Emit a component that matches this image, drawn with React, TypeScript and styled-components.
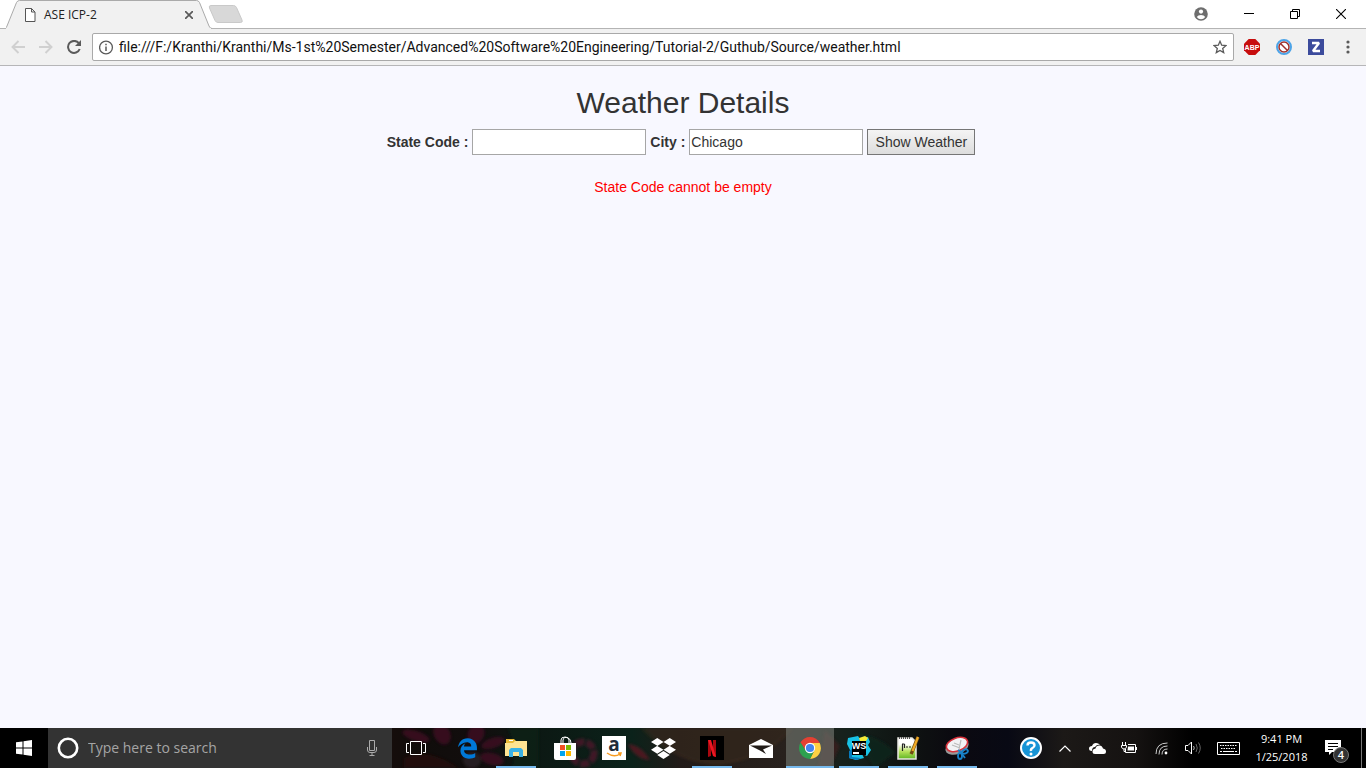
import React, { useState } from "react";
import styled, { createGlobalStyle } from "styled-components";
import { FaDropbox, FaEdgeLegacy } from "react-icons/fa";

const uiFont = `"Segoe UI", "Open Sans", "Noto Sans", sans-serif`;

const GlobalStyle = createGlobalStyle`
  *, *::before, *::after { box-sizing: border-box; }
  body { margin: 0; background: #f8f8ff; }
  svg { display: block; flex: none; }
  button, input { font: inherit; color: inherit; }
`;

const Screen = styled.div`
  display: flex;
  flex-direction: column;
  min-height: 100vh;
  font-family: ${uiFont};
`;

/* ---------- browser frame ---------- */

const TabStrip = styled.header`
  display: flex;
  height: 29px;
  background: #fff;
  border-bottom: 1px solid #b4b4b4;
`;

const Tab = styled.div`
  position: relative;
  z-index: 0;
  display: flex;
  align-items: center;
  width: 206px;
  height: 29px;
  margin-left: 6px;
  padding: 0 16px 0 18px;
  font-size: 12px;
  line-height: 16px;
  color: #222;
`;

const TabShape = styled.svg`
  position: absolute;
  inset: 0;
  z-index: -1;
`;

const TabTitle = styled.span`
  flex: 1;
  margin-left: 8px;
`;

const IconButton = styled.button<{ $width: number; $color?: string }>`
  display: flex;
  align-items: center;
  justify-content: center;
  flex: none;
  width: ${(p) => p.$width}px;
  height: 28px;
  padding: 0;
  border: 0;
  background: none;
  color: ${(p) => p.$color ?? "#5a5a5a"};
`;

const NewTab = styled(IconButton)`
  margin-left: -5px;
`;

const WindowControls = styled.div`
  display: flex;
  margin-left: auto;
  padding-right: 2px;
`;

const Toolbar = styled.nav`
  display: flex;
  align-items: center;
  height: 37px;
  padding: 0 2px 0 4px;
  background: #f1f1f1;
  border-bottom: 1px solid #b6b6b8;
`;

const AddressBar = styled.div`
  display: flex;
  align-items: center;
  flex: 1;
  min-width: 0;
  height: 28px;
  margin: 0 2px 0 4px;
  padding-left: 6px;
  background: #fff;
  border: 1px solid #a9a9a9;
  border-radius: 2px;
`;

const AddressInput = styled.input`
  flex: 1;
  min-width: 0;
  margin-left: 5px;
  padding: 0;
  border: 0;
  outline: 0;
  background: none;
  font-family: "Segoe UI", Roboto, sans-serif;
  font-size: 14px;
  line-height: 20px;
  color: #111;
`;

/* ---------- page ---------- */

const Page = styled.main`
  flex: 1;
  font-family: "Helvetica Neue", Helvetica, Arial, "Liberation Sans", sans-serif;
  font-size: 14px;
  line-height: 20px;
  color: #333;
  text-align: center;
`;

const Title = styled.h2`
  margin: 20px 0 10px;
  font-size: 30px;
  font-weight: 400;
  line-height: 33px;
`;

const WeatherForm = styled.form`
  display: flex;
  flex-wrap: wrap;
  align-items: center;
  justify-content: center;
  gap: 4px;
  padding-right: 4px;
`;

const FieldLabel = styled.label`
  font-weight: 700;
`;

const TextField = styled.input`
  width: 174px;
  height: 26px;
  padding: 1px;
  border: 1px solid #a6a6a6;
  background: #fff;
`;

const SubmitButton = styled.button`
  width: 108px;
  height: 26px;
  padding: 0;
  border: 1px solid #767676;
  background: linear-gradient(#f4f4f4, #dddddd);
  white-space: nowrap;
`;

const ErrorText = styled.p`
  margin: 22px 0 0;
  color: #f00;
`;

/* ---------- taskbar ---------- */

const Taskbar = styled.footer`
  position: relative;
  z-index: 0;
  display: flex;
  height: 40px;
  background: #000;
  color: #fff;
  overflow: hidden;
`;

const Wallpaper = styled.svg`
  position: absolute;
  left: 392px;
  top: 0;
  z-index: -1;
`;

const TaskButton = styled.button<{ $active?: boolean; $running?: boolean }>`
  position: relative;
  display: flex;
  align-items: center;
  justify-content: center;
  flex: none;
  width: 48px;
  height: 40px;
  padding: 0;
  border: 0;
  background: ${(p) => (p.$active ? "rgba(120, 125, 118, 0.6)" : "none")};
  color: #fff;

  &::after {
    content: "";
    position: absolute;
    bottom: 0;
    left: ${(p) => (p.$active ? 0 : 4)}px;
    right: ${(p) => (p.$active ? 0 : 4)}px;
    height: 2px;
    background: ${(p) => (p.$running || p.$active ? "#76b9ed" : "none")};
  }
`;

const SearchBox = styled.label`
  display: flex;
  align-items: center;
  flex: none;
  width: 344px;
  padding: 0 12px 0 8px;
  background: #333;
`;

const SearchInput = styled.input`
  flex: 1;
  min-width: 0;
  margin-left: 8px;
  padding: 0;
  border: 0;
  outline: 0;
  background: none;
  font-size: 14px;
  line-height: 20px;

  &::placeholder { color: #a5a5a5; opacity: 1; }
`;

const TaskList = styled.div`
  display: flex;
  gap: 1px;
  margin-left: 3px;
`;

const Tray = styled.div`
  display: flex;
  align-items: center;
  margin-left: auto;
`;

const TrayButton = styled(IconButton)`
  height: 40px;
  color: #fff;
`;

const Clock = styled.time`
  width: 69px;
  text-align: center;
  font-size: 11px;
  line-height: 18px;
  white-space: nowrap;
`;

const DesktopEdge = styled.div`
  width: 5px;
  height: 40px;
  border-left: 1px solid #777;
`;

const WallpaperArt = () => (
  <Wallpaper width="800" height="40" viewBox="0 0 800 40" aria-hidden="true">
    <defs>
      <linearGradient id="wall">
        <stop offset="0" stopColor="#150d0b" />
        <stop offset=".04" stopColor="#100d0b" />
        <stop offset=".1" stopColor="#120d0d" />
        <stop offset=".18" stopColor="#0c1813" />
        <stop offset=".3" stopColor="#0b221a" />
        <stop offset=".36" stopColor="#221b18" />
        <stop offset=".49" stopColor="#28211d" />
        <stop offset=".57" stopColor="#15211c" />
        <stop offset=".64" stopColor="#0f1412" />
        <stop offset=".7" stopColor="#0b0a10" />
        <stop offset=".77" stopColor="#080914" />
        <stop offset=".84" stopColor="#1c1917" />
        <stop offset=".93" stopColor="#151211" />
        <stop offset="1" stopColor="#000" />
      </linearGradient>
      <filter id="soft"><feGaussianBlur stdDeviation="1.5" /></filter>
    </defs>
    <path fill="url(#wall)" d="M0 0H800V40H0Z" />
    <g filter="url(#soft)" opacity=".8">
      <g fill="#3f1022">
        <ellipse cx="24" cy="8" rx="14" ry="5" transform="rotate(18 24 8)" />
        <ellipse cx="50" cy="6" rx="8" ry="11" transform="rotate(-28 50 6)" />
        <ellipse cx="84" cy="6" rx="8" ry="10" transform="rotate(24 84 6)" />
        <ellipse cx="101" cy="15" rx="12" ry="5" transform="rotate(-18 101 15)" />
        <ellipse cx="100" cy="31" rx="12" ry="6" transform="rotate(14 100 31)" />
        <ellipse cx="80" cy="32" rx="9" ry="8" fill="#2b2226" />
      </g>
      <path d="M12 30Q34 20 60 36L66 40H12Z" fill="#26100a" />
      <path d="M116 0Q126 23 120 40H146V0Z" fill="#082018" />
      <circle cx="191" cy="25" r="11" fill="none" stroke="#4d172c" strokeWidth="7" strokeDasharray="9 2" />
      <path d="M236 16Q249 17 258 32Q243 31 236 16Z" fill="#5c1520" />
      <path d="M252 0Q282 32 326 36Q376 30 398 0Z" fill="#30271f" />
      <path d="M250 0Q282 34 326 36Q376 30 400 0" fill="none" stroke="#4e341e" />
      <path d="M433 2L448 18L438 40H426Z" fill="#3a1c1c" />
      <path d="M463 5Q490 9 503 25L482 40Z" fill="#11281f" />
    </g>
  </Wallpaper>
);

const ChromeIcon = () => (
  <svg width="22" height="22" viewBox="0 0 22 22">
    <path fill="#e34133" d="M1.5 5.5A11 11 0 0 1 20.5 5.5V6H11L6.7 13.5Z" />
    <path fill="#fdd043" d="M20.7 6A11 11 0 0 1 11 22L15.3 13.5L11 6Z" />
    <path fill="#2da150" d="M1.5 5.5A11 11 0 0 0 11 22L15.3 13.5H6.7Z" />
    <circle cx="11" cy="11" r="5.2" fill="#fff" />
    <circle cx="11" cy="11" r="4.1" fill="#4384ef" />
  </svg>
);

const WebStormIcon = () => (
  <svg width="24" height="24" viewBox="0 0 24 24">
    <path fill="#18c3e6" d="M1 2L11 0L13 3L21 1L23 6L21 9L24 14L20 20L15 18L17 22L9 24L2 22L4 16L0 8Z" />
    <path fill="#f5ec37" d="M12 2L18 0L21 2L19 5H13Z" />
    <path fill="#087bbd" d="M2 15L5 13V21L14 22L10 24L2 22Z" />
    <path fill="#000" d="M5 5H19V19H5Z" />
    <text x="12" y="13" fill="#fff" fontFamily="Liberation Sans" fontWeight="700" fontSize="9" textAnchor="middle">WS</text>
    <path fill="#fff" d="M6 16H12V18H6Z" />
  </svg>
);

const NotepadIcon = () => (
  <svg width="24" height="24" viewBox="0 0 24 24">
    <defs>
      <linearGradient id="leaf" x2="0" y2="1">
        <stop offset=".3" stopColor="#fff" />
        <stop offset=".65" stopColor="#b4e05a" />
        <stop offset="1" stopColor="#5eb522" />
      </linearGradient>
    </defs>
    <path d="M2 2H16L20 6V23H2Z" fill="url(#leaf)" stroke="#e8e8e2" strokeWidth="1.5" />
    <path d="M3 2H15" stroke="#555" strokeWidth="2" strokeDasharray="1 1" />
    <path d="M6.500 8V15M6 8H8.500M8.500 8V12M10 11H12M13 11H15" fill="none" stroke="#222" strokeWidth="1.200" />
    <path d="M22 1L16 16L15 18" stroke="#704c12" strokeWidth="3.400" />
    <path d="M22 1L16.500 15" stroke="#f0aa25" strokeWidth="2.200" />
  </svg>
);

const SnippingIcon = () => (
  <svg width="24" height="24" viewBox="0 0 24 24" fill="none">
    <ellipse cx="12" cy="11" rx="12" ry="7" fill="#999" transform="rotate(-20 12 11)" />
    <ellipse cx="12" cy="8.500" rx="11" ry="6.500" fill="#f2f2f5" stroke="#d8323c" strokeWidth="1.600" transform="rotate(-20 12 8.500)" />
    <path d="M7 9L15 12M16 4L14 13M9 7L14 9" stroke="#bbb" strokeWidth="1.200" />
    <g stroke="#1882c9" strokeWidth="1.800">
      <ellipse cx="20" cy="15.500" rx="3" ry="2" transform="rotate(-20 20 15.500)" />
      <ellipse cx="15" cy="20" rx="2" ry="3" />
      <path d="M13 14L17 16.500V18L20 22" />
    </g>
  </svg>
);

const tasks: { name: string; icon: React.ReactNode; running?: boolean; active?: boolean }[] = [
  { name: "Edge", icon: <FaEdgeLegacy size={21} color="#0078d7" /> },
  {
    name: "File Explorer",
    running: true,
    icon: (
      <svg width="22" height="20" viewBox="0 0 22 20">
        <path fill="#e9b935" d="M1 1H9L11 3H21V6H1Z" />
        <path fill="#fff" d="M4 2H8V3H4Z" />
        <path fill="#ffe492" d="M0 5H8L10 3H22V18H0Z" />
        <path fill="#3ab2e5" d="M4 19V12L6 10H16L18 12V19H14V14H8V19Z" />
      </svg>
    ),
  },
  {
    name: "Store",
    icon: (
      <svg width="24" height="24" viewBox="0 0 24 24">
        <path d="M8 7V4Q8 1 12 1T16 4V7M10 7V4Q11 0 15 2Q18 3 18 7" fill="none" stroke="#fff" />
        <path fill="#fff" d="M1 7H23V22Q23 24 21 24H3Q1 24 1 22Z" />
        <path fill="#f25022" d="M7 9H12V14H7Z" />
        <path fill="#7fba00" d="M13 9H18V14H13Z" />
        <path fill="#00a4ef" d="M7 15H12V20H7Z" />
        <path fill="#ffb900" d="M13 15H18V20H13Z" />
      </svg>
    ),
  },
  {
    name: "Amazon",
    icon: (
      <svg width="24" height="24" viewBox="0 0 24 24" overflow="visible">
        <path fill="#fff" d="M0 0H24V24H0Z" />
        <text x="12" y="15" fill="#222c38" fontFamily="Open Sans" fontWeight="700" fontSize="19" textAnchor="middle">a</text>
        <path d="M5 17Q12 22 18 18M16 17H19L18 20" fill="none" stroke="#f79b20" strokeWidth="1.500" />
      </svg>
    ),
  },
  { name: "Dropbox", icon: <FaDropbox size={25} /> },
  {
    name: "Netflix",
    running: true,
    icon: (
      <svg width="24" height="24" viewBox="0 0 24 24">
        <path fill="#000" d="M0 0H24V24H0Z" />
        <path fill="#a9070f" d="M8 4H11V20L8 21ZM13 4H16V21L13 20Z" />
        <path fill="#ed1722" d="M8 4H11L16 21L13 20Z" />
      </svg>
    ),
  },
  {
    name: "Mail",
    icon: (
      <svg width="24" height="19" viewBox="0 0 24 19">
        <path fill="#fff" d="M0 6L12 0L24 6V19H0Z" />
        <path fill="#211b17" d="M1 6.500H23L14 10.500L17 15L10 11Z" />
      </svg>
    ),
  },
  { name: "Chrome", active: true, icon: <ChromeIcon /> },
  { name: "WebStorm", running: true, icon: <WebStormIcon /> },
  { name: "Notepad++", running: true, icon: <NotepadIcon /> },
  { name: "Snipping Tool", running: true, icon: <SnippingIcon /> },
];

const BrowserFrame = () => (
  <>
    <TabStrip>
      <Tab>
        <TabShape width="206" height="29" viewBox="0 0 206 29" aria-hidden="true">
          <path
            fill="#f1f1f1"
            stroke="#aaa"
            d="M-1 28.500Q0 28.500 1 26L10.500 2.500Q11.500 .5 13.500 .5H190.500Q192.500 .5 193.500 2.500L203 26Q204 28.500 206 28.500V31H-1Z"
          />
          <path d="M1 28.500H205" stroke="#f1f1f1" />
        </TabShape>
        <svg width="12" height="14" viewBox="0 0 12 14" fill="#fff" stroke="#555">
          <path d="M1.500 .5H7.500L11 4V13.500H1.500ZM7.500 .5V4H11" />
        </svg>
        <TabTitle>ASE ICP-2</TabTitle>
        <IconButton $width={14} aria-label="Close tab">
          <svg width="8" height="8" viewBox="0 0 8 8" stroke="currentColor" strokeWidth="1.700">
            <path d="M0 0L8 8M8 0L0 8" />
          </svg>
        </IconButton>
      </Tab>
      <NewTab $width={38} aria-label="New tab">
        <svg width="36" height="18" viewBox="0 0 36 18">
          <path
            d="M3 .5H25.500Q27.500 .5 28.500 2.500L34 15Q35 17.500 32.500 17.500H10Q8 17.500 7 15.500L1.500 3Q.5 .5 3 .5Z"
            fill="#d8d8d8"
            stroke="#c9c9c9"
          />
        </svg>
      </NewTab>
      <WindowControls>
        <IconButton $width={50} $color="#6e6e6e" aria-label="Profile">
          <svg width="14" height="14" viewBox="0 0 14 14">
            <circle cx="7" cy="7" r="6.800" fill="currentColor" />
            <circle cx="7" cy="4.600" r="2.100" fill="#fff" />
            <path d="M2.800 10Q4 8 7 8T11.200 10Q9.500 12.200 7 12.200T2.800 10Z" fill="#fff" />
          </svg>
        </IconButton>
        <IconButton $width={46} $color="#000" aria-label="Minimize">
          <svg width="10" height="10" viewBox="0 0 10 10"><path d="M0 4.500H10" stroke="currentColor" /></svg>
        </IconButton>
        <IconButton $width={46} $color="#000" aria-label="Restore">
          <svg width="10" height="10" viewBox="0 0 10 10" fill="none" stroke="currentColor">
            <path d="M.5 2.500H7.500V9.500H.5ZM2.500 2.500V.5H9.500V7.500H7.500" />
          </svg>
        </IconButton>
        <IconButton $width={46} $color="#000" aria-label="Close">
          <svg width="10" height="10" viewBox="0 0 10 10" stroke="currentColor" strokeWidth="1.100">
            <path d="M0 0L10 10M10 0L0 10" />
          </svg>
        </IconButton>
      </WindowControls>
    </TabStrip>

    <Toolbar>
      <IconButton $width={28} $color="#d0d0d0" aria-label="Back">
        <svg width="14" height="14" viewBox="0 0 14 14" fill="none" stroke="currentColor" strokeWidth="1.900">
          <path d="M14 7H1.500M7.500 1L1.500 7L7.500 13" />
        </svg>
      </IconButton>
      <IconButton $width={28} $color="#d0d0d0" aria-label="Forward">
        <svg width="14" height="14" viewBox="0 0 14 14" fill="none" stroke="currentColor" strokeWidth="1.900">
          <path d="M0 7H12.500M6.500 1L12.500 7L6.500 13" />
        </svg>
      </IconButton>
      <IconButton $width={28} aria-label="Reload">
        <svg width="14" height="14" viewBox="0 0 14 14">
          <path d="M11.800 3.200A6 6 0 1 0 12.700 9" fill="none" stroke="currentColor" strokeWidth="2" />
          <path d="M14 0V6H8Z" fill="currentColor" />
        </svg>
      </IconButton>
      <AddressBar>
        <svg width="15" height="15" viewBox="0 0 15 15" fill="none" stroke="#5a5a5a">
          <circle cx="7" cy="7.500" r="6.400" strokeWidth="1.300" />
          <path d="M7 6.500V11M7 3.800V5.300" strokeWidth="1.500" />
        </svg>
        <AddressInput
          aria-label="Address"
          defaultValue="file:///F:/Kranthi/Kranthi/Ms-1st%20Semester/Advanced%20Software%20Engineering/Tutorial-2/Guthub/Source/weather.html"
        />
        <IconButton $width={26} aria-label="Bookmark">
          <svg width="14" height="14" viewBox="0 0 14 14" fill="none" stroke="currentColor" strokeWidth="1.300">
            <path d="M7 1.300L8.700 5.200L13 5.600L9.700 8.400L10.700 12.600L7 10.400L3.300 12.600L4.300 8.400L1 5.600L5.300 5.200Z" />
          </svg>
        </IconButton>
      </AddressBar>
      <IconButton $width={32} aria-label="Adblock Plus">
        <svg width="16" height="16" viewBox="0 0 16 16">
          <path fill="#c70d0d" d="M4.700 0H11.300L16 4.700V11.300L11.300 16H4.700L0 11.300V4.700Z" />
          <text x="8" y="11" fill="#fff" fontFamily="Liberation Sans" fontWeight="700" fontSize="7" textAnchor="middle">ABP</text>
        </svg>
      </IconButton>
      <IconButton $width={32} aria-label="Blocker">
        <svg width="16" height="16" viewBox="0 0 16 16">
          <circle cx="8" cy="8" r="7" fill="#fff" stroke="#4ca4e8" strokeWidth="2" />
          <g fill="none" stroke="#9f302b" strokeWidth="1.500">
            <circle cx="8" cy="8" r="5" />
            <path d="M4.500 4.500L11.500 11.500" />
          </g>
        </svg>
      </IconButton>
      <IconButton $width={32} aria-label="Zotero">
        <svg width="16" height="16" viewBox="0 0 16 16">
          <path fill="#3c4b9c" d="M0 0H16V16H0Z" />
          <path d="M4 4H11L5 12H12" fill="none" stroke="#fff" strokeWidth="2.400" strokeLinejoin="bevel" />
        </svg>
      </IconButton>
      <IconButton $width={32} aria-label="Menu">
        <svg width="4" height="14" viewBox="0 0 4 14" fill="currentColor">
          <circle cx="2" cy="2" r="1.600" />
          <circle cx="2" cy="7" r="1.600" />
          <circle cx="2" cy="12" r="1.600" />
        </svg>
      </IconButton>
    </Toolbar>
  </>
);

const WeatherPage = () => {
  const [state, setState] = useState("");
  const [city, setCity] = useState("Chicago");
  return (
    <Page>
      <Title>Weather Details</Title>
      <WeatherForm onSubmit={(e) => e.preventDefault()}>
        <FieldLabel htmlFor="state">State Code :</FieldLabel>
        <TextField id="state" value={state} onChange={(e) => setState(e.target.value)} />
        <FieldLabel htmlFor="city">City :</FieldLabel>
        <TextField id="city" value={city} onChange={(e) => setCity(e.target.value)} />
        <SubmitButton type="submit">Show Weather</SubmitButton>
      </WeatherForm>
      {!state && <ErrorText role="alert">State Code cannot be empty</ErrorText>}
    </Page>
  );
};

const SystemTray = () => (
  <Tray>
    <TrayButton $width={36} aria-label="Help">
      <svg width="22" height="22" viewBox="0 0 22 22">
        <circle cx="11" cy="11" r="10" fill="#1694d6" stroke="#fff" strokeWidth="2" />
        <path d="M7.500 8.500Q7.500 5.500 11 5.500T14.500 8.300Q14.500 10 12.500 11T11 14" fill="none" stroke="#fff" strokeWidth="2.400" />
        <circle cx="11" cy="17" r="1.500" fill="#fff" />
      </svg>
    </TrayButton>
    <TrayButton $width={32} aria-label="Show hidden icons">
      <svg width="12" height="7" viewBox="0 0 12 7" fill="none" stroke="currentColor" strokeWidth="1.200">
        <path d="M.5 6.500L6 1L11.500 6.500" />
      </svg>
    </TrayButton>
    <TrayButton $width={32} aria-label="OneDrive">
      <svg width="17" height="11" viewBox="0 0 17 11">
        <path fill="#fff" d="M3 8Q0 8 0 5.500T3 3Q4 0 7 0Q9.500 0 11 2Q8 1 6 4Q3 4 3 8Z" />
        <path fill="#fff" d="M6 11Q3.500 11 3.500 8.500T6.500 5.500Q7 2.500 10.500 2.500Q13 2.500 14 5.500Q17 6 17 8.500T14.500 11Z" />
      </svg>
    </TrayButton>
    <TrayButton $width={32} aria-label="Battery">
      <svg width="16" height="12" viewBox="0 0 16 12" fill="none" stroke="#fff">
        <path d="M1.500 0V3M4.500 0V3M.5 3.500H5.500V5Q5 7 3 7T.5 5V3.500M3 7V9.500H4.500M7 2.500H14.500V10.500H4.500V7M15.500 5V8" />
        <path d="M7 4.500H13V8.500H6.500Z" fill="#fff" stroke="none" />
      </svg>
    </TrayButton>
    <TrayButton $width={32} aria-label="Network">
      <svg width="13" height="13" viewBox="0 0 13 13" fill="none" stroke="#ccc">
        <path d="M1 12Q1 1 12.500 1M4 12.500Q4 4 12.500 4M7 12.500Q7 7 12.500 7" />
        <circle cx="11" cy="11" r="1.400" fill="#fff" stroke="none" />
      </svg>
    </TrayButton>
    <TrayButton $width={32} aria-label="Volume">
      <svg width="16" height="14" viewBox="0 0 16 14" fill="none" stroke="#fff">
        <path d="M.5 4.500H3L6.500 1V13L3 9.500H.5Z" />
        <path d="M8.500 5Q10 7 8.500 9" stroke="#bbb" />
        <path d="M11 3Q13.500 7 11 11M13.500 1.500Q17 7 13.500 12.500" stroke="#666" />
      </svg>
    </TrayButton>
    <TrayButton $width={38} aria-label="Keyboard">
      <svg width="23" height="13" viewBox="0 0 23 13" fill="none" stroke="#fff">
        <path d="M.5 .5H22.500V12.500H.5Z" />
        <path d="M3 3.500H20M4 6.500H19" strokeDasharray="1.500 1" />
        <path d="M3 9.500H5M6 9.500H17M18 9.500H20" />
      </svg>
    </TrayButton>
    <Clock>
      9:41 PM
      <br />
      1/25/2018
    </Clock>
    <TrayButton $width={45} aria-label="Notifications, 4 new">
      <svg width="27" height="30" viewBox="0 0 27 30">
        <path fill="#fff" d="M0 7H16V19H7L4 22V19H0Z" />
        <path d="M3 10.500H13M3 13.500H13M3 16.500H8" stroke="#000" />
        <circle cx="16" cy="22" r="7.500" fill="#333" stroke="#777" />
        <text x="16" y="26" fill="#fff" fontFamily="Open Sans" fontWeight="600" fontSize="11" textAnchor="middle">4</text>
      </svg>
    </TrayButton>
    <DesktopEdge />
  </Tray>
);

export default function App() {
  return (
    <Screen>
      <GlobalStyle />
      <BrowserFrame />
      <WeatherPage />
      <Taskbar>
        <WallpaperArt />
        <TaskButton aria-label="Start">
          <svg width="16" height="16" viewBox="0 0 16 16" fill="#fff">
            <path d="M0 2.300L6.500 1.400V7.500H0ZM7.500 1.200L16 0V7.500H7.500ZM0 8.500H6.500V14.600L0 13.700ZM7.500 8.500H16V16L7.500 14.800Z" />
          </svg>
        </TaskButton>
        <SearchBox>
          <svg width="24" height="24" viewBox="0 0 24 24">
            <circle cx="12" cy="12" r="9.200" fill="none" stroke="#fff" strokeWidth="2.600" />
          </svg>
          <SearchInput aria-label="Search" placeholder="Type here to search" />
          <svg width="16" height="16" viewBox="0 0 12 16" fill="none" stroke="#aaa">
            <path d="M3.500 .5H8.500V10.500H3.500ZM1.500 7V10Q1.500 12.500 4 12.500H8Q10.500 12.500 10.500 10V7M6 12.500V15.500M3.500 15.500H8.500" />
          </svg>
        </SearchBox>
        <TaskButton aria-label="Task view">
          <svg width="20" height="14" viewBox="0 0 20 14" fill="none" stroke="#fff">
            <path d="M4.500 .5H15.500V13.500H4.500ZM3 2.500H.5V11.500H3M17 2.500H19.500V11.500H17" />
          </svg>
        </TaskButton>
        <TaskList>
          {tasks.map((task) => (
            <TaskButton key={task.name} aria-label={task.name} $running={task.running} $active={task.active}>
              {task.icon}
            </TaskButton>
          ))}
        </TaskList>
        <SystemTray />
      </Taskbar>
    </Screen>
  );
}
